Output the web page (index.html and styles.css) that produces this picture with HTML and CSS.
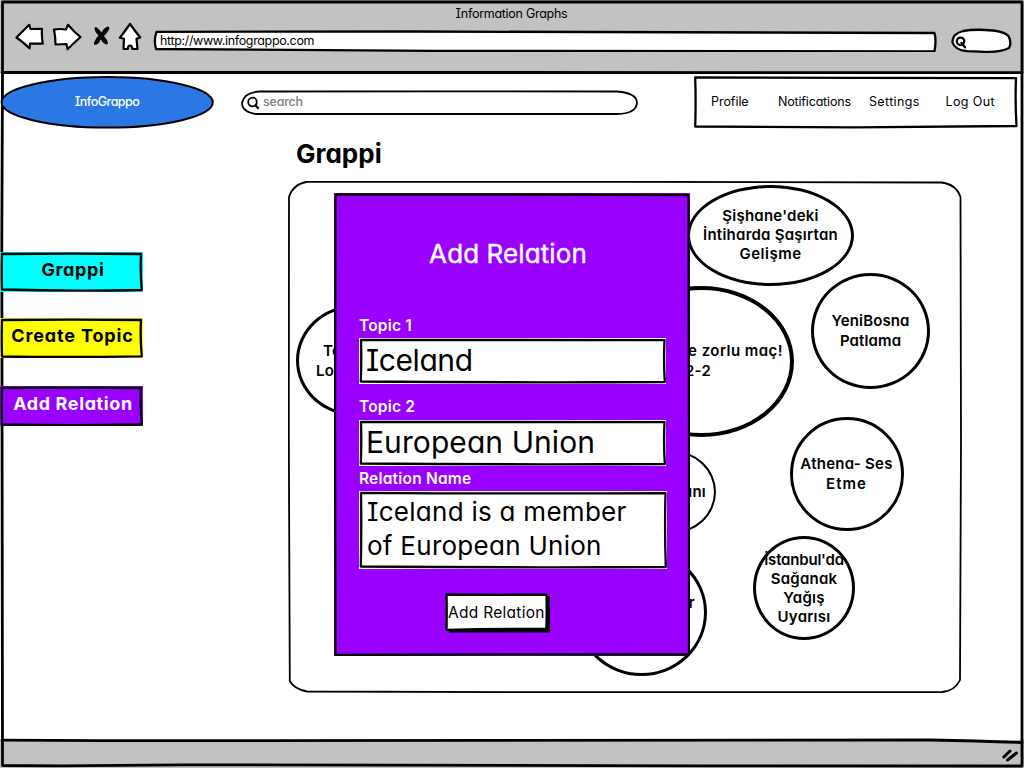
FILE: index.html
```html
<!DOCTYPE html>
<html lang="en">
<head>
<meta charset="utf-8">
<title>Information Graphs</title>
<link rel="stylesheet" href="styles.css">
</head>
<body>
<div class="window">
  <header class="chrome">
    <div class="chrome-title">Information Graphs</div>
    <div class="toolbar">
      <svg class="ico back" viewBox="15 22 30 30"><path d="M16.500 37.500L29.200 24.800L30.500 29L42 28.800Q41.500 37 42.800 43.600L30 43.500L29.500 48.300Q23 42 16.500 37.500Z"/></svg>
      <svg class="ico forward" viewBox="52 22 31 30"><path d="M54 29.500Q60 28.500 66 29.500L68 24.800Q74 32 80.500 37Q74 43 67.500 49.200L66.500 44L55.500 44.500Q55.500 37 54 29.500Z"/></svg>
      <svg class="ico stop" viewBox="92 22 20 30"><path class="solid" d="M95.500 27Q97.500 27 101.500 32.500Q104 27.500 108 26.500Q110 27 109 29.500Q107 33.500 104 36Q107.500 39.500 108 43.500Q107 45 105 44Q101.500 41.500 100.800 39.500Q98.500 44.500 95 45Q93 44 94.500 41.500Q96 38 98.500 35.500Q94.500 31.500 94.500 28Z"/></svg>
      <svg class="ico home" viewBox="118 22 25 30"><path d="M130 24Q135 31 140.300 37.500L136.500 38.800L137.500 48.800L132.500 49Q132 45.500 130 45.500Q128 45.500 127.800 49L123.500 48.800L124 38.800L119.800 37.800Q125 31 130 24Z"/></svg>
      <div class="address stack">
        <svg class="sketch" viewBox="0 0 784 22"><path class="white w2" d="M3.500 1.800L260 1.500L781.500 3Q783.500 10 781.500 21.300L280 20.800L3 19Q0.500 10 3.500 1.800Z"/></svg>
        <span class="address-text">http://www.infograppo.com</span>
      </div>
      <svg class="ico find" viewBox="951 22 62 32"><path class="w2" d="M963 31Q975 28.800 993 30.500Q1005 32 1008.500 36Q1012 43 1009 48Q1000 52.500 985 51.800L967 51.200Q955 50 952.500 42.500Q952 34 963 31Z"/><circle class="w2" cx="960.500" cy="41.300" r="3.700"/><path class="w2" d="M961.500 43L965 47.300"/></svg>
    </div>
  </header>

  <main class="page">
    <div class="topbar">
      <div class="logo stack">
        <svg class="sketch" viewBox="0 0 214 53"><ellipse class="blue" cx="107.200" cy="26.300" rx="105.600" ry="25.300"/></svg>
        <span class="logo-text">InfoGrappo</span>
      </div>
      <div class="search stack">
        <svg class="sketch" viewBox="0 0 398 26"><path class="white line" d="M20 1.500L200 1.300L377 1.500Q397 3 397 13Q396 23.800 377 24L16 24Q2 22 2 13Q4 2 20 1.500Z"/><circle class="white line" cx="12.500" cy="12" r="4.300"/><path class="w2" d="M15.500 15.300L18 18"/></svg>
        <span class="search-text">search</span>
      </div>
      <nav class="nav stack">
        <svg class="sketch" viewBox="0 0 324 53"><path class="white w2" d="M1.200 1.500L160 1.800L322 2.200Q321 25 322.500 50L160 51.300L1.200 50.500Q2 25 1.200 1.500Z"/></svg>
        <div class="nav-items"><a class="profile">Profile</a><a class="notifications">Notifications</a><a class="settings">Settings</a><a class="logout">Log Out</a></div>
      </nav>
    </div>

    <div class="body">
      <aside class="sidebar">
        <div class="side-btn stack cyan">
          <svg class="sketch" viewBox="0 0 143 40"><path class="w2" d="M2 2Q70 1.300 141 2Q140 20 141.800 38Q70 39.300 2 37.500Q1.500 20 2 2Z"/></svg>
          <span class="side-text short">Grappi</span>
        </div>
        <div class="side-btn stack yellow">
          <svg class="sketch" viewBox="0 0 143 40"><path class="w2" d="M2 2Q70 1.300 141 2Q140 20 141.800 38.300Q70 39.600 2 38.500Q1.500 20 2 2Z"/></svg>
          <span class="side-text wide">Create Topic</span>
        </div>
        <div class="side-btn stack purple">
          <svg class="sketch" viewBox="0 0 143 40"><path class="w2" d="M2 2Q70 1.300 141 2Q140 20 141.800 38.500Q70 39.800 2 38.500Q1.500 20 2 2Z"/></svg>
          <span class="side-text">Add Relation</span>
        </div>
      </aside>

      <section class="content">
        <h1 class="heading">Grappi</h1>
        <div class="board">
          <svg class="board-frame" viewBox="0 0 674 512"><path class="line" d="M19 0.800L340 0.800L653 1.500Q668 3 672.500 16L673 260L672 499Q667 510 654 511L240 511.200L19 510.500Q6 508 1.800 500L0.800 250L1 16Q5 3 19 0.800Z"/></svg>

          <div class="node node-left"><span>To</span><span>Lo</span></div>
          <div class="node node-big"><span class="maç">e zorlu maç!</span><span>2-2</span></div>
          <div class="node node-small"><span>ını</span></div>
          <div class="node node-bottom"><span>r</span></div>
          <div class="node node-sishane"><span>Şişhane'deki</span><span>İntiharda Şaşırtan</span><span class="loose">Gelişme</span></div>
          <div class="node node-yeni"><span class="snug">YeniBosna</span><span class="snug">Patlama</span></div>
          <div class="node node-athena"><span>Athena- Ses</span><span class="looser">Etme</span></div>
          <div class="node node-istanbul"><span class="tight">İstanbul'da</span><span>Sağanak</span><span>Yağış</span><span>Uyarısı</span></div>

          <div class="modal stack">
            <svg class="sketch" viewBox="0 0 356 463"><path class="w2" d="M1.500 1.500L180 1.500L354.500 2L355 230L355 461.500L180 461.300L1.500 462L1 230Z"/></svg>
            <form class="form">
              <h2 class="modal-title">Add Relation</h2>
              <label class="label">Topic 1</label>
              <div class="field stack">
                <svg class="sketch" viewBox="0 0 307 46"><path class="w2" d="M2 1.800Q150 2.600 305.500 2.200Q304.500 23 305.800 44Q150 44.800 1.800 43.500Q2.600 23 2 1.800Z"/></svg>
                <span class="value iceland">Iceland</span>
              </div>
              <label class="label second">Topic 2</label>
              <div class="field stack">
                <svg class="sketch" viewBox="0 0 307 46"><path class="w2" d="M2 1.800Q150 2.600 305.500 2.200Q304.500 23 305.800 44Q150 44.800 1.800 43.500Q2.600 23 2 1.800Z"/></svg>
                <span class="value">European Union</span>
              </div>
              <label class="label third">Relation Name</label>
              <div class="field area stack">
                <svg class="sketch" viewBox="0 0 308 78"><path class="w2" d="M2 1.800Q150 2.800 306.500 2.200Q305.500 39 306.800 76Q150 76.800 1.800 75.500Q2.600 39 2 1.800Z"/></svg>
                <span class="value long">Iceland is a member<br>of European Union</span>
              </div>
              <div class="submit stack">
                <svg class="sketch" viewBox="0 0 105 40"><path class="shadow" d="M4 3H105V39.500H4Z"/><path class="white w2" d="M1.500 1.500Q50 2 101.500 1.600Q102 18 101.300 36Q50 35.300 1.500 36.800Q2 18 1.500 1.500Z"/></svg>
                <span class="submit-text">Add Relation</span>
              </div>
            </form>
          </div>
        </div>
      </section>
    </div>
  </main>

  <footer class="status">
    <svg class="grip" viewBox="1000 746 20 18"><path d="M1003.800 757L1010 751M1007.500 760L1016.500 753"/></svg>
  </footer>

  <svg class="frame" viewBox="0 0 1024 768">
    <path class="w25" d="M2.500 2L1022 2L1022 766L700 765.800L180 764.800L60 765.800L2.500 765.500L1.800 240L2.500 74Z"/>
    <path class="w25" d="M2 72.500L400 72.500L1022 72.600"/>
    <path class="w25" d="M2 740.200L100 740.700L500 740.300L930 740Q980 741 1022 742.500"/>
  </svg>
</div>
</body>
</html>
```
FILE: styles.css
```css
* { box-sizing: border-box; }

body {
  margin: 0;
  background: #fff;
  color: #000;
  font-family: Inter, "Noto Sans", sans-serif;
  font-size: 12.5px;
  font-feature-settings: "cv11", "cv08";
  white-space: nowrap;
}

svg { display: block; fill: none; stroke: #000; stroke-linejoin: round; stroke-linecap: round; }
.line { stroke-width: 1.8px; }
.w2 { stroke-width: 2.3px; }
.w25 { stroke-width: 2.8px; }
.white { fill: #fff; }
.blue { fill: #2b78e4; stroke-width: 2px; }
.solid { fill: #000; stroke: none; }
.shadow { fill: #000; stroke: none; }

/* Hand-drawn outline and content share one grid cell */
.stack { display: grid; }
.stack > * { grid-area: 1 / 1; }
.sketch { width: 100%; height: 100%; }

.window {
  position: relative;
  display: flex;
  flex-direction: column;
  width: 1024px;
  height: 768px;
  overflow: hidden;
}
.frame { position: absolute; inset: 0; width: 1024px; height: 768px; z-index: 0; }

/* Browser chrome */
.chrome { height: 73px; padding-top: 5px; background: #c2c2c2; }
.chrome-title { height: 17px; padding-right: 1px; line-height: 17px; text-align: center; letter-spacing: -0.28px; }
.toolbar { display: flex; padding-left: 15px; height: 32px; }
.ico { flex: none; height: 30px; stroke-width: 2.2px; fill: #fff; }
.back { width: 30px; }
.forward { width: 31px; margin-left: 7px; }
.stop { width: 20px; margin-left: 9px; }
.home { width: 25px; margin-left: 6px; }
.address { width: 784px; height: 22px; margin: 8px 0 0 10px; }
.address-text { padding-left: 7px; line-height: 22px; letter-spacing: -0.35px; }
.find { width: 62px; height: 32px; margin-left: 14px; }

/* Page */
.page { height: 667px; padding-top: 3px; position: relative; z-index: 1; }
.topbar { display: flex; height: 53px; }
.logo { width: 214px; }
.logo-text { line-height: 51px; text-align: center; color: #fff; font-weight: 500; letter-spacing: -0.53px; }
.search { width: 398px; height: 26px; margin: 14px 0 0 26px; }
.search-text { padding-left: 23px; line-height: 23px; color: #7d7d7d; font-weight: 500; letter-spacing: -0.2px; }
.nav { width: 324px; margin-left: 56px; }
.nav-items { display: flex; padding-left: 17px; line-height: 51px; }
.profile { width: 67px; letter-spacing: -0.05px; }
.notifications { width: 91px; letter-spacing: -0.17px; }
.settings { width: 76.500px; letter-spacing: 0.35px; }
.logout { letter-spacing: 0.37px; }

.body { display: flex; }
.sidebar { width: 143px; padding-top: 123px; }
.side-btn { height: 40px; margin-bottom: 26px; }
.side-text { padding-left: 3px; line-height: 35px; text-align: center; font-size: 18px; font-weight: 700; letter-spacing: 0.61px; }
.side-text.wide { letter-spacing: 0.85px; padding-left: 2px; }
.cyan { background: #0ff; }
.yellow { background: #ff0; margin-bottom: 28px; }
.purple { background: #90f; color: #fff; }

.content { margin-left: 145px; padding-top: 10px; }
.heading { margin: 0 0 12px 8px; font-size: 26px; line-height: 30px; font-weight: 700; }

/* Topic board: free canvas with bubbles */
.board { position: relative; width: 674px; height: 512px; }
.board-frame { width: 674px; height: 512px; }
.node {
  position: absolute;
  display: flex;
  flex-direction: column;
  align-items: center;
  justify-content: center;
  border: 3px solid #000;
  border-radius: 50%;
  font-size: 15px;
  font-weight: 600;
  line-height: 20px;
  letter-spacing: 0.25px;
  font-feature-settings: "cv11";
}
.node .snug { letter-spacing: 0.12px; }
.node .loose { letter-spacing: 0.5px; }
.node .looser { letter-spacing: 1px; }
.node .tight { letter-spacing: -0.2px; }
.node-left { left: 8px; top: 124px; width: 118px; height: 111px; align-items: flex-start; padding-left: 17px; }
.node-left span:first-child { padding-left: 7px; }
.node-big { left: 321px; top: 105px; width: 185px; height: 151px; border-width: 4px; padding-bottom: 1px; }
.node-big span:first-child { align-self: flex-end; margin-right: 7px; letter-spacing: 0.45px; }
.node-big span:last-child { margin-right: 7px; }
.node-small { left: 338px; top: 269px; width: 90px; height: 84px; border-width: 2px; align-items: flex-end; padding-right: 8px; }
.node-bottom { left: 288px; top: 368px; width: 131px; height: 127px; align-items: flex-end; padding: 0 9px 20px 0; }
.node-sishane { left: 399px; top: 4px; width: 167px; height: 101px; line-height: 19.300px; padding-bottom: 2px; }
.node-yeni { left: 523px; top: 92px; width: 119px; height: 116px; }
.node-athena { left: 501.500px; top: 235.500px; width: 114px; height: 114px; }
.node-istanbul { left: 465px; top: 355px; width: 102px; height: 104px; line-height: 19.200px; }

/* Dialog over the board */
.modal { position: absolute; left: 46px; top: 12px; width: 356px; height: 463px; background: #90f; }
.form { padding: 45.500px 0 0 25px; color: #fff; }
.modal-title { margin: 0 0 48px -2px; padding-right: 31px; font-size: 26px; font-weight: 400; line-height: 30px; text-align: center; letter-spacing: 0.1px; -webkit-text-stroke: 0.4px #fff; }
.label { display: block; height: 18px; margin-bottom: 3px; line-height: 18px; font-size: 15.500px; font-weight: 600; letter-spacing: 0.2px; }
.label.second { margin-top: 14px; margin-bottom: 4px; }
.label.third { margin-top: 4px; margin-bottom: 3px; }
.field { width: 307px; height: 46px; background: #fff; color: #000; }
.value { padding-left: 7px; font-size: 30px; line-height: 44px; letter-spacing: 0.08px; }
.value.iceland { letter-spacing: -0.43px; }
.field.area { width: 308px; height: 78px; }
.value.long { padding: 4.500px 0 0 8px; font-size: 26px; line-height: 34px; letter-spacing: 0.27px; }
.submit { width: 105px; height: 40px; margin: 24px 0 0 86px; color: #000; }
.submit-text { padding-left: 3px; font-size: 15.500px; line-height: 39px; letter-spacing: 0.28px; }

/* Status bar */
.status { display: flex; justify-content: flex-end; height: 28px; padding: 6px 4px 0 0; background: #c2c2c2; }
.grip { width: 20px; height: 18px; stroke-width: 3px; }
```
